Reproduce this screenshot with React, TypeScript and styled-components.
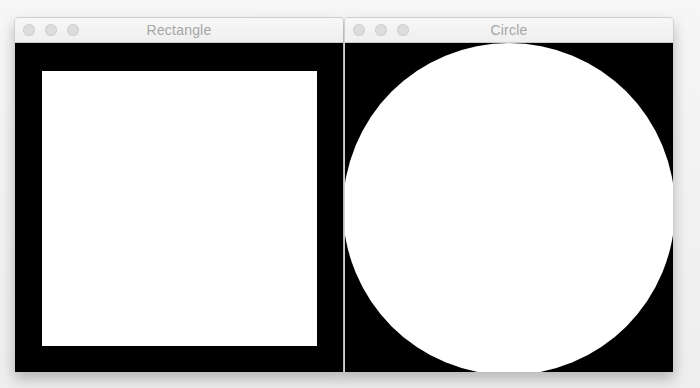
import React from "react";
import styled, { createGlobalStyle } from "styled-components";

const GlobalStyle = createGlobalStyle`
  html, body {
    margin: 0;
    padding: 0;
    background: #f3f3f3;
    font-family: "Liberation Sans", Arial, sans-serif;
  }
`;

const Desktop = styled.div`
  width: 700px;
  height: 388px;
  box-sizing: border-box;
  padding: 17px 0 0 14px;
  display: flex;
  align-items: flex-start;
  overflow: hidden;
  background: linear-gradient(#f6f6f6, #eeeeee);
`;

const Window = styled.div`
  width: 330px;
  display: flex;
  flex-direction: column;
  border-radius: 5px 5px 0 0;
  border: 1px solid #cfcfcf;
  border-bottom: none;
  box-sizing: border-box;
  box-shadow: 0 7px 14px rgba(0, 0, 0, 0.24);
  overflow: hidden;
`;

const TitleBar = styled.div`
  position: relative;
  height: 24px;
  display: flex;
  align-items: center;
  justify-content: center;
  background: linear-gradient(#f7f7f7, #efefef);
  border-bottom: 1px solid #c9c9c9;
`;

const Lights = styled.div`
  position: absolute;
  left: 8px;
  top: 6px;
  display: flex;
  gap: 10px;
`;

const Light = styled.span`
  width: 12px;
  height: 12px;
  border-radius: 50%;
  background: #dcdcdc;
  box-shadow: inset 0 0 0 1px #d2d2d2;
`;

const Title = styled.span`
  font-size: 14px;
  color: #a6a6a6;
  letter-spacing: 0.2px;
`;

const Canvas = styled.div`
  height: 329px;
  background: #000;
  display: flex;
  align-items: center;
  justify-content: center;
  overflow: hidden;
`;

const Rect = styled.div`
  width: 275px;
  height: 275px;
  margin-top: 2px;
  background: #fff;
`;

const Shot = ({ title, children }: { title: string; children: React.ReactNode }) => (
  <Window>
    <TitleBar>
      <Lights>
        <Light />
        <Light />
        <Light />
      </Lights>
      <Title>{title}</Title>
    </TitleBar>
    <Canvas>{children}</Canvas>
  </Window>
);

export default function App() {
  return (
    <>
      <GlobalStyle />
      <Desktop>
        <Shot title="Rectangle">
          <Rect />
        </Shot>
        <Shot title="Circle">
          <svg width="328" height="329" viewBox="0 0 328 329">
            <circle cx="164" cy="166" r="166" fill="#fff" />
          </svg>
        </Shot>
      </Desktop>
    </>
  );
}
